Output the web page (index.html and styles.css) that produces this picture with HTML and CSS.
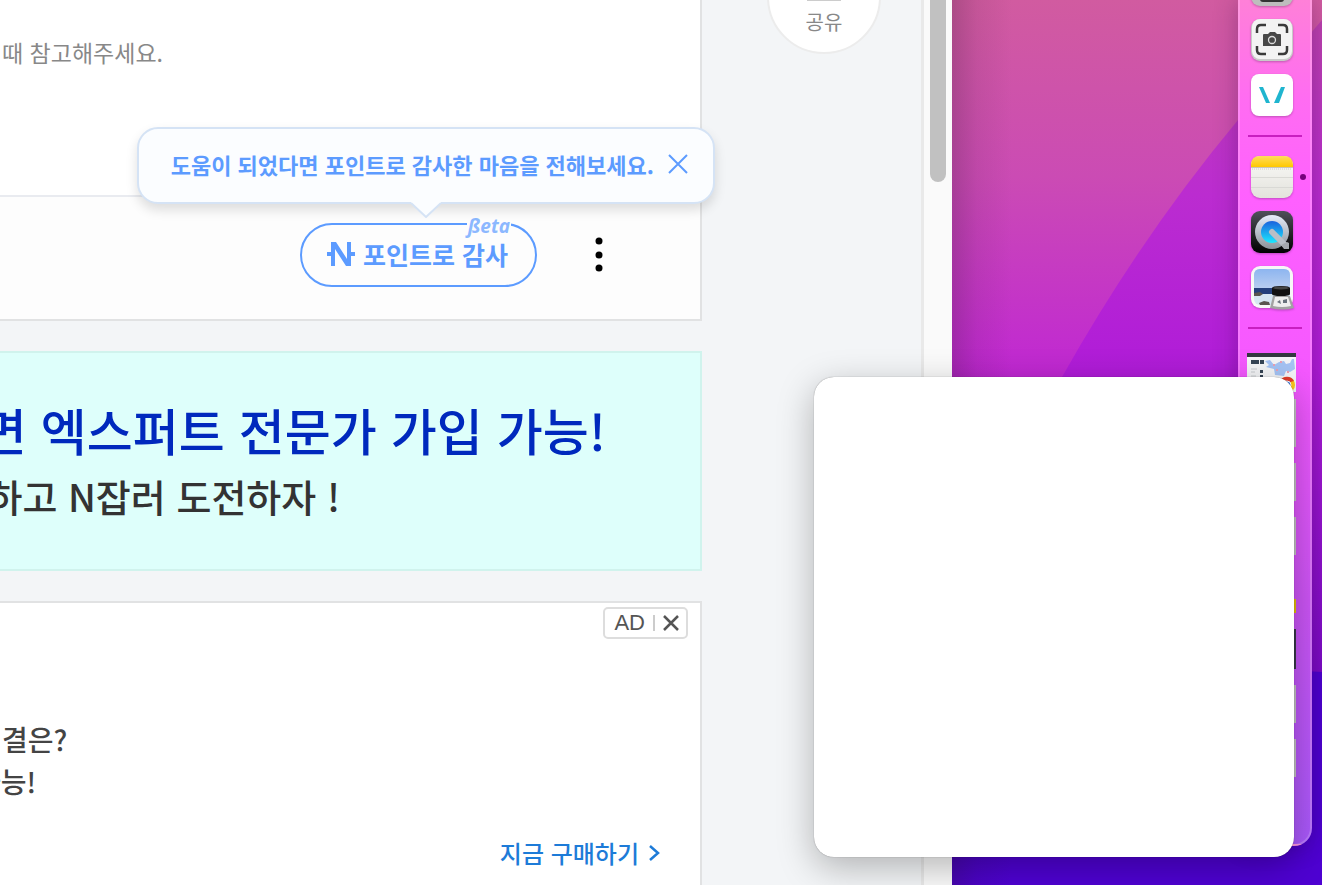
FILE: index.html
```html
<!DOCTYPE html>
<html lang="ko">
<head>
    <meta charset="UTF-8">
    <meta name="viewport" content="width=device-width, initial-scale=1.0">
    <title>지식iN</title>
    <link rel="stylesheet" href="styles.css">
</head>
<body>

<div class="screen">
    <div class="browser">
        <main class="content">
            <section class="card answer">
                <p class="answer-text">때 참고해주세요.</p>
                <div class="answer-footer">
                    <button class="point-btn" type="button">
                        <svg width="28" height="24" viewBox="0 0 28 24" aria-hidden="true">
                            <path d="M0 10h8v4H0zM20 10h8v4h-8z" fill="#5c9bff"/>
                            <path d="M4 0h5l11 17V0h4v24h-5L8 7v17H4z" fill="#5c9bff"/>
                        </svg>
                        포인트로 감사
                        <span class="beta">ßeta</span>
                    </button>
                    <button class="more-btn" type="button" aria-label="더보기">
                        <svg width="8" height="36" viewBox="0 0 8 36">
                            <circle cx="4" cy="4" r="3.5"/>
                            <circle cx="4" cy="18" r="3.5"/>
                            <circle cx="4" cy="31" r="3.5"/>
                        </svg>
                    </button>
                    <div class="tooltip">
                        <span>도움이 되었다면 포인트로 감사한 마음을 전해보세요.</span>
                        <button class="tooltip-close" type="button" aria-label="닫기">
                            <svg width="20" height="20" viewBox="0 0 20 20">
                                <path d="M1 1l18 18M19 1L1 19" stroke="#5c9bff" stroke-width="2"/>
                            </svg>
                        </button>
                        <svg class="tooltip-arrow" width="30" height="16" viewBox="0 0 30 16" aria-hidden="true">
                            <path d="M0 0h30v1L15 15 0 1z" fill="#fbfdff"/>
                            <path d="M0 1l15 14L30 1" fill="none" stroke="#d5e3f5" stroke-width="2"/>
                        </svg>
                    </div>
                </div>
            </section>

            <section class="card banner">
                <h2>면 엑스퍼트 전문가 가입 가능!</h2>
                <p>하고 N잡러 도전하자 !</p>
            </section>

            <section class="card ad">
                <div class="ad-label">
                    <span>AD</span>
                    <button class="ad-close" type="button" aria-label="광고 닫기">
                        <svg width="16" height="16" viewBox="0 0 16 16">
                            <path d="M1 1l14 14M15 1L1 15" stroke="#555" stroke-width="2.5"/>
                        </svg>
                    </button>
                </div>
                <div class="ad-text">
                    <p>결은?</p>
                    <p class="cut">가능!</p>
                </div>
                <a class="buy-link" href="#">
                    지금 구매하기
                    <svg width="11" height="18" viewBox="0 0 11 18" aria-hidden="true">
                        <path d="M1 2l8 7-8 7" fill="none" stroke="#1d7bd8" stroke-width="2.5"/>
                    </svg>
                </a>
            </section>
        </main>

        <aside class="rail">
            <button class="share" type="button">공유</button>
        </aside>

        <div class="scrollbar"><div class="scroll-thumb"></div></div>
    </div>

    <div class="desktop">
        <svg class="wallpaper" viewBox="0 0 370 885" preserveAspectRatio="none" aria-hidden="true">
            <defs>
                <linearGradient id="sky" x1="0" y1="0" x2="0" y2="1">
                    <stop offset="0" stop-color="#d15ba0"/>
                    <stop offset=".2" stop-color="#cb4bb4"/>
                    <stop offset=".42" stop-color="#c028d2"/>
                    <stop offset="1" stop-color="#7010c8"/>
                </linearGradient>
                <linearGradient id="hill" x1="0" y1="0" x2="0" y2="1">
                    <stop offset="0" stop-color="#bd42ae"/>
                    <stop offset=".25" stop-color="#bb2cd0"/>
                    <stop offset=".5" stop-color="#b01cd8"/>
                    <stop offset="1" stop-color="#7408c4"/>
                </linearGradient>
            </defs>
            <path d="M0 0h370v885H0z" fill="url(#sky)"/>
            <path d="M370 20Q340 55 286 120 190 235 110 377L40 520V720H370z" fill="url(#hill)"/>
            <path d="M0 650l370 22v213H0z" fill="#4e02d2"/>
        </svg>
        <nav class="dock" aria-label="Dock">
            <svg class="app app-cut" viewBox="0 0 42 42">
                <rect width="42" height="42" rx="9" fill="#bdbdbd"/>
                <rect x="9" y="9" width="24" height="29" rx="3" fill="#333"/>
            </svg>
            <svg class="app" viewBox="0 0 42 42">
                <rect width="42" height="42" rx="9" fill="#c9c9c9"/>
                <rect x="1" width="40" height="40" rx="8" fill="#f3f3f3"/>
                <path d="M6 14V10q0-4 4-4h5M27 6h5q4 0 4 4v4M36 27v4q0 4-4 4h-5M15 35h-5q-4 0-4-4v-4" fill="none" stroke="#3a3a3a" stroke-width="2.5"/>
                <path d="M13 15h4l2-2h5l2 2h3q1 0 1 1v11H12V16q0-1 1-1z" fill="#484848"/>
                <circle cx="21" cy="21" r="3.5" fill="none" stroke="#ddd" stroke-width="1.3"/>
            </svg>
            <svg class="app" viewBox="0 0 42 42">
                <rect width="42" height="42" rx="8" fill="#fff"/>
                <path d="M8 13h4l7 16h-4zM30 13h4l-6 16h-5z" fill="#1fb5cf"/>
            </svg>
            <hr>
            <div class="running">
                <svg class="app" viewBox="0 0 42 42">
                    <defs>
                        <linearGradient id="notes" x1="0" y1="0" x2="0" y2="1">
                            <stop offset="0" stop-color="#ffdd5c"/>
                            <stop offset="1" stop-color="#ffc800"/>
                        </linearGradient>
                        <linearGradient id="paper" x1="0" y1="0" x2="0" y2="1">
                            <stop offset="0" stop-color="#fafaf8"/>
                            <stop offset="1" stop-color="#e3e2dc"/>
                        </linearGradient>
                    </defs>
                    <rect width="42" height="42" rx="9" fill="url(#paper)"/>
                    <path d="M0 11V9q0-9 9-9h24q9 0 9 9v2z" fill="url(#notes)"/>
                    <path d="M0 11.500h42" stroke="#c9c4b4"/>
                    <path d="M1 13h40" stroke="#ccc" stroke-dasharray="1 1"/>
                    <path d="M0 21.500h42M0 31.500h42" stroke="#d9d9d5"/>
                </svg>
            </div>
            <svg class="app" viewBox="0 0 42 42">
                <defs>
                    <linearGradient id="qtbg" x1="0" y1="0" x2="0" y2="1">
                        <stop offset="0" stop-color="#50505a"/>
                        <stop offset="1" stop-color="#000"/>
                    </linearGradient>
                    <linearGradient id="qtring" x1="0" y1="0" x2="0" y2="1">
                        <stop offset="0" stop-color="#e6ecfa"/>
                        <stop offset="1" stop-color="#8c9299"/>
                    </linearGradient>
                    <linearGradient id="qtlens" x1="0" y1="0" x2="0" y2="1">
                        <stop offset="0" stop-color="#1b62dd"/>
                        <stop offset="1" stop-color="#1ce9ff"/>
                    </linearGradient>
                </defs>
                <rect width="42" height="42" rx="9" fill="url(#qtbg)"/>
                <circle cx="21" cy="21" r="17" fill="url(#qtring)"/>
                <circle cx="21" cy="21" r="11" fill="url(#qtlens)"/>
                <path d="M21 21l12 12" stroke="#b9bec6" stroke-width="6" stroke-linecap="round"/>
                <path d="M30 34l6-3 2 1v6h-5z" fill="#a4a8ad"/>
            </svg>
            <svg class="app" viewBox="0 0 42 42">
                <defs>
                    <linearGradient id="seasky" x1="0" y1="0" x2="0" y2="1">
                        <stop offset="0" stop-color="#8db5f0"/>
                        <stop offset="1" stop-color="#b7cdf0"/>
                    </linearGradient>
                </defs>
                <rect width="42" height="42" rx="9" fill="#f7f7f7"/>
                <rect x="3" y="3" width="36" height="36" rx="6" fill="#d6e6f2"/>
                <path d="M3 22V9q0-6 6-6h24q6 0 6 6v13z" fill="url(#seasky)"/>
                <path d="M3 22h36v6H3z" fill="#24407c"/>
                <path d="M3 27l6-1 3 2-3 2H3zM8 37l5-2 5 1 1 3H9z" fill="#5a5550"/>
                <path d="M22 30h17l4 12q-11 3-24 0z" fill="#a2a2a2"/>
                <path d="M24 31h13l3 9q-9 2-18 0z" fill="#eee"/>
                <path d="M26 36l3-2 1 4zM32 34l4-1v4h-4z" fill="#68717c"/>
                <path d="M21 22q0-2 9-2t9 2v6q0 2-9 2t-9-2z" fill="#111"/>
                <ellipse cx="30" cy="22" rx="8" ry="1.500" fill="#444"/>
            </svg>
            <hr>
            <div class="minimized">
                <svg class="thumb thumb-map" width="49" height="46" viewBox="0 0 49 46">
                    <path d="M0 0h49v39H0z" fill="#f4f5f7"/>
                    <path d="M0 0h49v4H0z" fill="#333840"/>
                    <path d="M18 8l5-1 4 5 5-3 5-1 2 3 4-1 2-4 2 0 1 10-5 3-4-1-2 5-9-1-1-6-8-2 3-2z" fill="#a5c3f4"/>
                    <path d="M4 7h4v4H4zM8 7h4v4H8zM13 7h4v4h-4zM13 17h3v3h-3zM13 22h3v3h-3z" fill="#354454"/>
                    <path d="M4 16h6M4 19h4M4 23h5" stroke="#c9ccd0"/>
                    <path d="M26 12h2M33 9h2M40 19h2M29 17h2" stroke="#e9a0b4" stroke-width="2"/>
                    <circle cx="40" cy="32" r="8" fill="#ffc619"/>
                    <path d="M33 28a8 8 0 0 1 14 0l-7 2z" fill="#e23c2c"/>
                    <circle cx="40" cy="32" r="4" fill="#3f7ee8" stroke="#fff"/>
                </svg>
                <div class="thumb tall"></div>
                <div class="thumb"></div>
                <div class="thumb"></div>
                <div class="thumb note"></div>
                <div class="thumb dark"></div>
                <div class="thumb"></div>
                <div class="thumb"></div>
            </div>
        </nav>
    </div>

    <div class="blank-window"></div>
</div>

</body>
</html>
```
FILE: styles.css
```css
* {
    box-sizing: border-box;
}
body {
    margin: 0;
    font-family: "Noto Sans CJK KR", sans-serif;
    color: #444;
}
h2, p {
    margin: 0;
    font-weight: 400;
    white-space: nowrap;
}
button {
    padding: 0;
    border: none;
    background: none;
    font-family: inherit;
    cursor: pointer;
}
svg {
    display: block;
    flex: none;
}
.screen {
    position: relative;
    display: flex;
    min-height: 100vh;
    overflow: hidden;
}

/* browser window */
.browser {
    flex: 1;
    display: flex;
    min-width: 0;
    background-color: #f3f5f7;
}
.content {
    flex: 1;
    min-width: 0;
    display: flex;
    flex-direction: column;
    gap: 30px;
}
.card {
    background-color: #fff;
    border: 2px solid #e1e2e3;
    border-left: none;
}
.answer {
    border-top: none;
}
.answer-text {
    padding: 35px 0 126px 2px;
    font-size: 23px;
    line-height: 34px;
    color: #888;
}
.answer-footer {
    position: relative;
    display: flex;
    justify-content: flex-end;
    align-items: center;
    gap: 58px;
    height: 124px;
    padding-right: 97px;
    padding-bottom: 6px;
    border-top: 2px solid #e9ebf0;
    background-color: #fdfdfd;
}
.point-btn {
    position: relative;
    display: flex;
    align-items: center;
    gap: 8px;
    height: 64px;
    padding: 0 27px 2px 25px;
    border: 2px solid #5c9bff;
    border-radius: 32px;
    font-size: 25px;
    font-weight: 700;
    color: #5c9bff;
}
.beta {
    position: absolute;
    top: -8px;
    right: 24px;
    padding: 0 1px;
    background-color: #fdfdfd;
    font-family: "Open Sans", sans-serif;
    font-size: 19px;
    font-style: italic;
    font-weight: 700;
    line-height: 18px;
    color: #8cb8ff;
}
.tooltip {
    position: absolute;
    top: -70px;
    right: -15px;
    display: flex;
    align-items: center;
    gap: 14px;
    height: 77px;
    padding: 0 25px 4px 32px;
    border: 2px solid #d5e3f5;
    border-radius: 21px;
    background-color: #fbfdff;
    box-shadow: 0 6px 12px rgba(0, 0, 0, 0.13);
    font-size: 22px;
    font-weight: 700;
    color: #5c9bff;
    white-space: nowrap;
}
.tooltip-arrow {
    position: absolute;
    top: 73px;
    left: 50%;
    margin-left: -15px;
}

/* expert banner */
.banner {
    display: flex;
    flex-direction: column;
    align-items: flex-end;
    height: 220px;
    padding: 41px 94px 0 0;
    border-color: #d0f3ed;
    background-color: #defffb;
    overflow: hidden;
}
.banner h2 {
    font-size: 50px;
    font-weight: 500;
    line-height: 70px;
    color: #0029bd;
}
.banner p {
    padding-right: 266px;
    font-size: 38px;
    font-weight: 500;
    line-height: 64px;
    color: #333;
}

/* ad card */
.ad {
    flex: 1;
    display: flex;
    flex-direction: column;
    align-items: flex-end;
    padding: 4px 12px 13px 2px;
    border-bottom: none;
    overflow: hidden;
}
.ad-label {
    display: flex;
    align-items: center;
    height: 32px;
    padding: 0 7px 0 9px;
    border: 2px solid #ddd;
    border-radius: 5px;
    font-family: "Liberation Sans", sans-serif;
    font-size: 22px;
    color: #555;
}
.ad-close {
    margin-left: 8px;
    padding-left: 8px;
    border-left: 2px solid #ccc;
}
.ad-text {
    align-self: flex-start;
    padding: 79px 0 34px;
    font-size: 28px;
    line-height: 42px;
}
.ad-text p {
    font-weight: 500;
}
.ad-text .cut {
    text-indent: -27px;
}
.buy-link {
    display: flex;
    align-items: center;
    gap: 10px;
    padding-right: 28px;
    font-size: 24px;
    font-weight: 500;
    line-height: 34px;
    color: #1d7bd8;
    text-decoration: none;
}

/* share button and scrollbar */
.rail {
    flex: none;
    width: 219px;
    padding-left: 65px;
}
.share {
    width: 114px;
    height: 114px;
    margin-top: -60px;
    padding-top: 48px;
    border: 2px solid #ececec;
    border-radius: 50%;
    background: linear-gradient(#ccc, #ccc) center 57px / 34px 2px no-repeat #fff;
    font-size: 20px;
    color: #888;
}
.scrollbar {
    flex: none;
    width: 31px;
    padding-left: 6px;
    border-left: 3px solid #e9e9e9;
    background-color: #fafafa;
}
.scroll-thumb {
    width: 16px;
    height: 182px;
    border-radius: 0 0 8px 8px;
    background-color: #c1c1c1;
}

/* desktop */
.desktop {
    position: relative;
    flex: none;
    display: flex;
    justify-content: flex-end;
    align-items: flex-start;
    width: 370px;
    padding-right: 10px;
}
.wallpaper {
    position: absolute;
    inset: 0;
    width: 100%;
    height: 100%;
}
.desktop::before {
    content: "";
    position: absolute;
    inset: 0;
    z-index: 1;
    background: linear-gradient(90deg, rgba(40, 20, 40, 0.22), rgba(40, 20, 40, 0.08) 25px, transparent 60px);
}
.dock {
    position: relative;
    display: flex;
    flex-direction: column;
    align-items: flex-start;
    gap: 13px;
    width: 74px;
    padding: 0 0 67px 11px;
    border: 2px solid rgba(255, 255, 255, 0.2);
    border-top: none;
    border-radius: 0 0 18px 18px;
    background: linear-gradient(#ff80d8, #ff6cf2 100px, #ff60ff 200px, #f558ff 370px, #cc54f5 600px, #a858fa);
    box-shadow: 0 0 24px rgba(40, 0, 60, 0.3);
}
.app {
    width: 42px;
    height: 42px;
    overflow: visible;
    filter: drop-shadow(0 1px 1px rgba(0, 0, 0, 0.25));
}
.app-cut {
    margin-top: -36px;
}
.dock hr {
    width: 54px;
    height: 2px;
    margin: 6px 0 6px -3px;
    border: none;
    background-color: #c81fc0;
}
.running {
    display: flex;
    align-items: center;
    gap: 7px;
}
.running::after {
    content: "";
    width: 6px;
    height: 6px;
    border-radius: 50%;
    background-color: #76007c;
}
.minimized {
    display: flex;
    flex-direction: column;
    gap: 16px;
    margin: 5px 0 0 -4px;
}
.thumb {
    width: 49px;
    height: 38px;
    border-right: 2px solid #c4c4c4;
    background-color: #dedede;
}
.thumb-map {
    height: 46px;
    margin-bottom: -16px;
    border: none;
    background: none;
}
.thumb.tall {
    height: 48px;
}
.thumb.note {
    height: 42px;
    border: none;
    background: linear-gradient(transparent 28px, #e5bf08 28px);
}
.thumb.dark {
    height: 40px;
    border-color: #383848;
    background-color: #202830;
}
.blank-window {
    position: absolute;
    top: 377px;
    right: 28px;
    z-index: 2;
    width: 480px;
    height: 480px;
    border-radius: 20px;
    background-color: #fff;
    box-shadow: 0 0 1px rgba(0, 0, 0, 0.5), 0 10px 36px rgba(0, 0, 0, 0.28);
}
```
